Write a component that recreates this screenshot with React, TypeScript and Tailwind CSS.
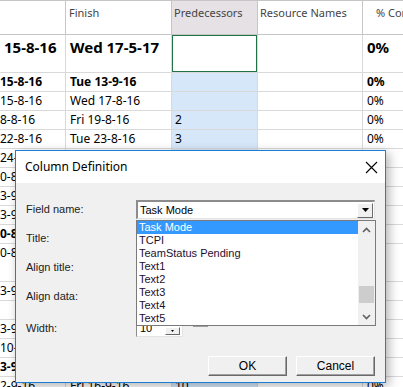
import React from 'react'

const colW = ['w-[66px]', 'w-[106px]', 'w-[86px]', 'w-[105px]', 'flex-1']
const colPad = ['pl-0', 'pl-[4px]', 'pl-[3px]', 'pl-[3px]', 'pl-[4px]']
const headPad = ['pl-0', 'pl-[3px]', 'pl-[2px]', 'pl-[2px]', 'pl-[13px]']

type Row = { h: string; c: string[]; bold?: boolean; big?: boolean; sel?: boolean }

const rows: Row[] = [
  { h: 'h-[38px]', big: true, sel: true, c: ['15-8-16', 'Wed 17-5-17', '', '', '0%'] },
  { h: 'h-[19px]', bold: true, c: ['15-8-16', 'Tue 13-9-16', '', '', '0%'] },
  { h: 'h-[19px]', c: ['15-8-16', 'Wed 17-8-16', '', '', '0%'] },
  { h: 'h-[19px]', c: ['8-8-16', 'Fri 19-8-16', '2', '', '0%'] },
  { h: 'h-[19px]', c: ['22-8-16', 'Tue 23-8-16', '3', '', '0%'] },
  { h: 'h-[19px]', c: ['24-8-16', 'Wed 24-8-16', '4', '', '0%'] },
  { h: 'h-[19px]', c: ['0-8-16', 'Tue 30-8-16', '5', '', '0%'] },
  { h: 'h-[19px]', c: ['3-9-16', 'Fri 2-9-16', '6', '', '0%'] },
  { h: 'h-[19px]', c: ['3-9-16', 'Mon 5-9-16', '7', '', '0%'] },
  { h: 'h-[19px]', bold: true, c: ['0-8-16', 'Fri 9-9-16', '', '', '0%'] },
  { h: 'h-[38px]', c: ['0-8-16', 'Wed 31-8-16', '8', '', '0%'] },
  { h: 'h-[19px]', c: ['3-9-16', 'Fri 9-9-16', '', '', '0%'] },
  { h: 'h-[19px]', c: ['', '', '', '', ''] },
  { h: 'h-[19px]', c: ['3-9-16', 'Mon 12-9-16', '9', '', '0%'] },
  { h: 'h-[19px]', c: ['10-9-16', 'Tue 13-9-16', '', '', '0%'] },
  { h: 'h-[19px]', bold: true, c: ['3-9-16', 'Fri 16-9-16', '', '', '0%'] },
  { h: 'h-[19px]', c: ['2-9-16', 'Fri 16-9-16', '10', '', '0%'] },
]

const header = ['', 'Finish', 'Predecessors', 'Resource Names', '% Complete']

const listItems = ['Task Mode', 'TCPI', 'TeamStatus Pending', 'Text1', 'Text2', 'Text3', 'Text4', 'Text5']

function Grid() {
  return (
    <div className="flex flex-col font-['Noto_Sans',sans-serif] text-black">
      <div className="flex h-[35px] border-t border-b border-[#c6c6c6]">
        {header.map((t, i) => (
          <div
            key={i}
            className={`${colW[i]} ${headPad[i]} ${i === 2 ? 'bg-[#e5e1e5]' : ''} ${i < 4 ? 'border-r border-[#c6c6c6]' : ''} pt-[3px] text-[11px] leading-[17px] text-[#444] whitespace-nowrap overflow-hidden`}
          >
            {t}
          </div>
        ))}
      </div>
      {rows.map((r, ri) => (
        <div key={ri} className={`flex ${r.h} border-b border-[#d9d9d9]`}>
          {r.c.map((t, i) => (
            <div
              key={i}
              className={`relative ${colW[i]} ${colPad[i]} ${i === 2 && !r.sel ? 'bg-[#d5e7f9]' : ''} ${i < 4 ? 'border-r border-[#d9d9d9]' : ''} whitespace-nowrap overflow-hidden ${
                r.big ? 'text-[15px] font-bold leading-[22px] pt-[1px]' : r.bold ? 'text-[12px] font-bold leading-[18px]' : 'text-[12px] leading-[18px]'
              } ${r.big && i === 0 ? 'pl-[4px]' : ''}`}
            >
              {r.sel && i === 2 && (
                <div className="absolute -left-px -top-px -right-px -bottom-px border-2 border-[#217346]" />
              )}
              {t}
            </div>
          ))}
        </div>
      ))}
    </div>
  )
}

function Chevron({ up }: { up?: boolean }) {
  return (
    <svg width="9" height="6" viewBox="0 0 9 6">
      <polyline
        points={up ? '1,5 4.5,1.5 8,5' : '1,1 4.5,4.5 8,1'}
        fill="none"
        stroke="#606060"
        strokeWidth="1.6"
      />
    </svg>
  )
}

function DropTri({ w = 7 }: { w?: number }) {
  return (
    <svg width={w} height={Math.ceil(w / 2)} viewBox={`0 0 ${w} ${Math.ceil(w / 2)}`}>
      <polygon points={`0,0 ${w},0 ${w / 2},${Math.ceil(w / 2)}`} fill="#000" />
    </svg>
  )
}

function Dialog() {
  const labels = ['Field name:', 'Title:', 'Align title:', 'Align data:']
  return (
    <div className="absolute left-[15px] top-[150px] w-[371px] h-[233px] border border-[#1a7fd4] bg-[#f0f0f0] shadow-[3px_3px_10px_rgba(0,0,0,0.3)] flex flex-col font-['Liberation_Sans',Arial,sans-serif]">
      <div className="h-[32px] bg-white flex items-center justify-between pl-[9px] pr-[7px] shrink-0">
        <span className="font-['Noto_Sans',sans-serif] text-[12px] text-black">Column Definition</span>
        <svg width="13" height="13" viewBox="0 0 13 13">
          <path d="M1 1 L12 12 M12 1 L1 12" stroke="#000" strokeWidth="1.1" />
        </svg>
      </div>
      <div className="relative flex-1 flex flex-col pt-[12px] text-[11px] text-[#222]">
        {labels.map((l, i) => (
          <div key={l} className="flex items-center h-[29px] pl-[10px]">
            <span className="w-[110px]">{l}</span>
            {i === 0 && (
              <div className="flex items-center w-[239px] h-[19px] bg-white border-t-2 border-l-2 border-[#8c8c8c] border-r border-b border-r-[#e3e3e3] border-b-[#e3e3e3]">
                <span className="flex-1 pl-[2px] text-black">Task Mode</span>
                <div className="w-[16px] h-[15px] mr-px flex items-center justify-center bg-[#f0f0f0] border border-t-white border-l-white border-r-[#696969] border-b-[#696969]">
                  <DropTri />
                </div>
              </div>
            )}
          </div>
        ))}
        <div className="flex items-center h-[31px] pl-[10px] pt-[3px]">
          <span className="w-[110px]">Width:</span>
          <div className="flex items-end w-[47px] h-[17px] bg-white border-t border-l border-[#8c8c8c] border-r border-b border-r-[#e3e3e3] border-b-[#e3e3e3]">
            <span className="flex-1 pl-[3px] leading-[15px] text-black">10</span>
            <div className="w-[15px] h-[8px] mb-px mr-[2px] flex items-center justify-center bg-[#f0f0f0] border border-t-white border-l-white border-r-[#696969] border-b-[#696969]">
              <DropTri w={3} />
            </div>
          </div>
          <div className="ml-[10px] w-[15px] h-[12px] border border-[#8c8c8c] border-b-[#a0a0a0] bg-white -mt-[14px]" />
        </div>

        <div className="absolute left-[120px] top-[37px] w-[240px] h-[106px] bg-white border border-[#7a7a7a] flex">
          <div className="flex-1 flex flex-col">
            {listItems.map((t, i) => (
              <div
                key={t}
                className={`h-[13px] leading-[13px] pl-[2px] whitespace-nowrap ${i === 0 ? 'bg-[#3399ff] text-white' : 'text-[#1c1030]'}`}
              >
                {t}
              </div>
            ))}
          </div>
          <div className="w-[17px] bg-[#f0f0f0] flex flex-col items-center">
            <div className="h-[17px] flex items-center justify-center">
              <Chevron up />
            </div>
            <div className="flex-1 w-full flex flex-col px-px">
              <div className="h-[48px]" />
              <div className="h-[17px] bg-[#cdcdcd]" />
            </div>
            <div className="h-[17px] flex items-center justify-center">
              <Chevron />
            </div>
          </div>
        </div>

        <div className="mt-auto flex justify-end gap-[9px] pr-[10px] pb-[6px]">
          {['OK', 'Cancel'].map(b => (
            <div
              key={b}
              className="w-[79px] h-[20px] flex items-center justify-center bg-[#f0f0f0] border border-t-white border-l-white border-r-[#696969] border-b-[#696969] shadow-[inset_-1px_-1px_0_#a0a0a0] text-[12px] text-black"
            >
              {b}
            </div>
          ))}
        </div>
      </div>
    </div>
  )
}

export default function App() {
  return (
    <div className="relative w-[403px] h-[387px] overflow-hidden bg-white">
      <Grid />
      <Dialog />
    </div>
  )
}
